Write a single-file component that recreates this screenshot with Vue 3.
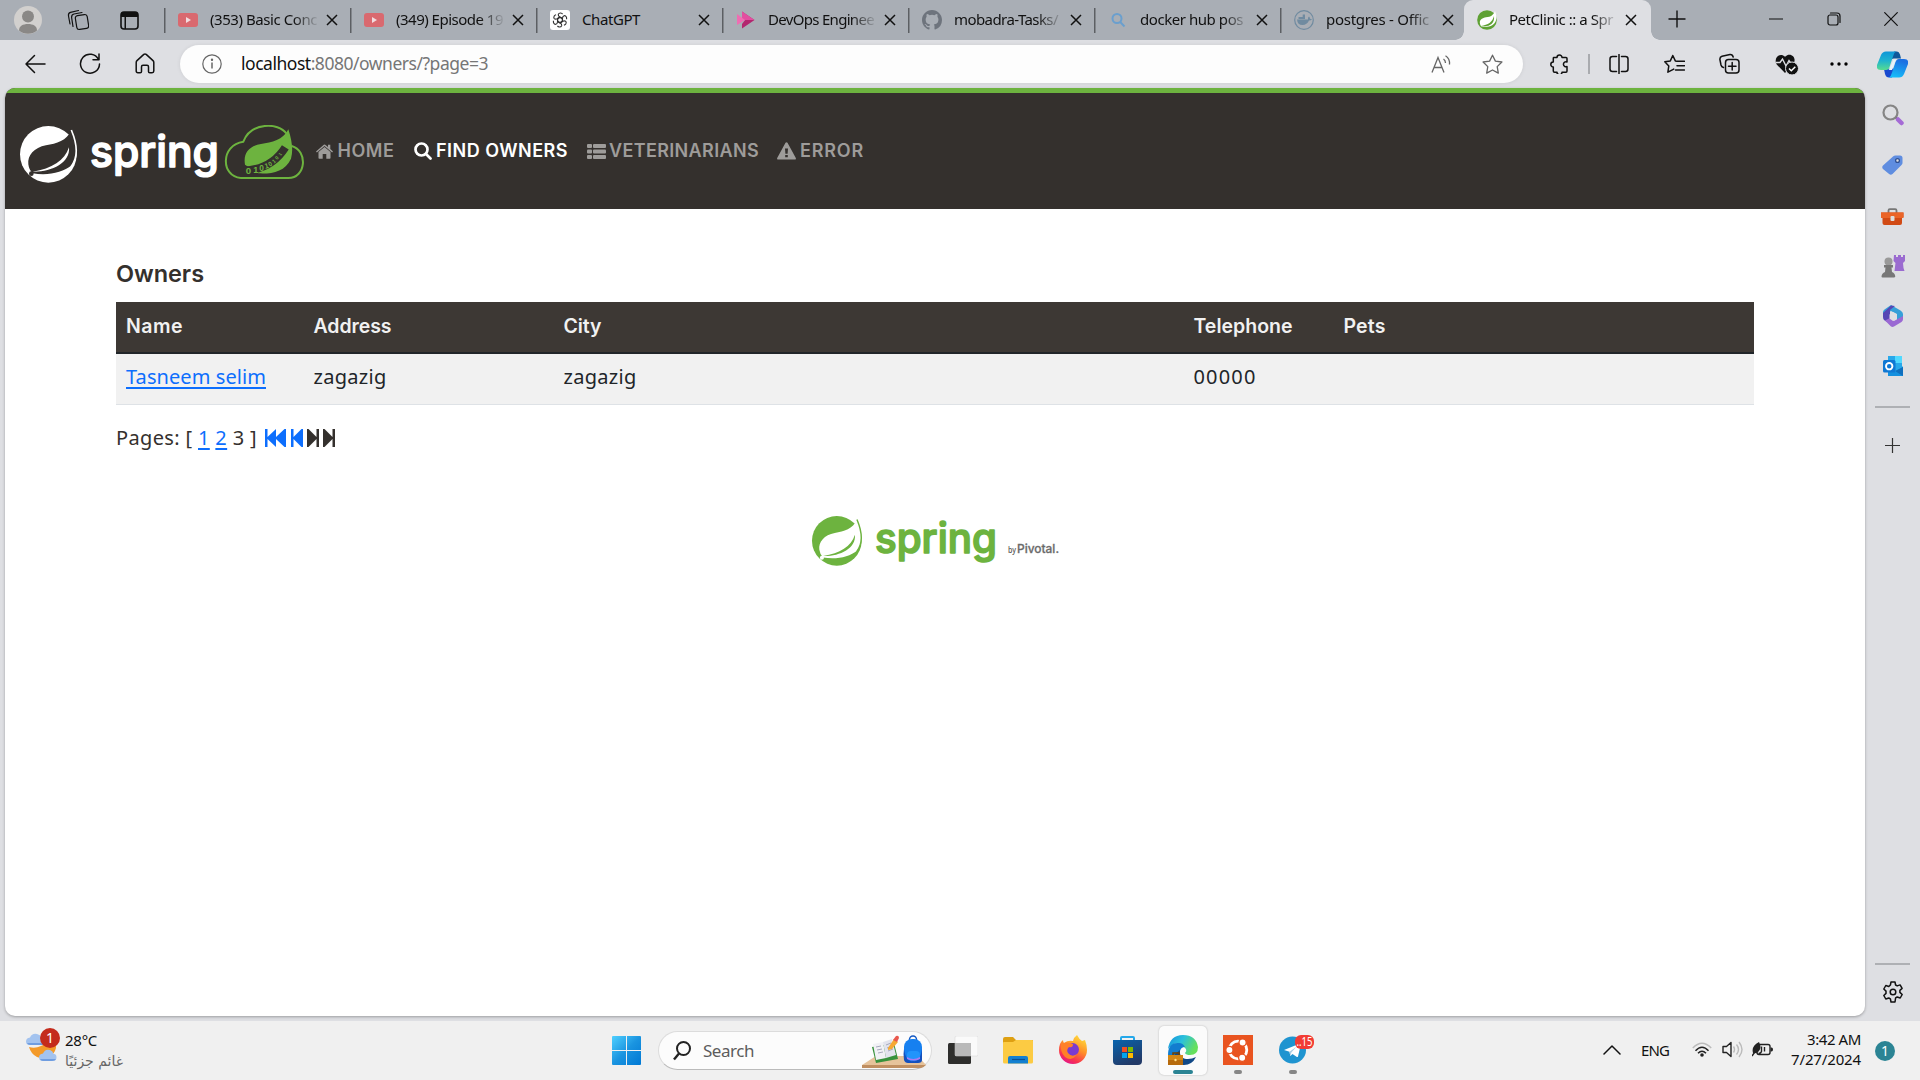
<script setup>
// Tracks a label so that it fills the given width in pixels.
const vFit = {
  mounted(el, { value }) {
    const range = document.createRange()
    range.selectNodeContents(el)
    const natural = range.getBoundingClientRect().width
    const count = el.textContent.trim().length
    el.style.letterSpacing = `${((value - natural) / count).toFixed(3)}px`
  },
}

const tabs = [
  { icon: 'youtube', title: '(353) Basic Conc', sample: 107 },
  { icon: 'youtube', title: '(349) Episode 19', sample: 107 },
  { icon: 'chatgpt', title: 'ChatGPT', sample: 58 },
  { icon: 'devops', title: 'DevOps Enginee', sample: 106 },
  { icon: 'github', title: 'mobadra-Tasks/', sample: 104 },
  { icon: 'search', title: 'docker hub pos', sample: 103 },
  { icon: 'docker', title: 'postgres - Offic', sample: 103 },
  { icon: 'spring', title: 'PetClinic :: a Spr', sample: 104, active: true },
]

const menu = [
  { icon: 'home', label: 'HOME', width: 57 },
  { icon: 'find', label: 'FIND OWNERS', width: 132, active: true },
  { icon: 'list', label: 'VETERINARIANS', width: 150 },
  { icon: 'warn', label: 'ERROR', width: 64 },
]

const owners = [
  { name: 'Tasneem selim', address: 'zagazig', city: 'zagazig', telephone: '00000', pets: '' },
]
</script>

<template>
  <div class="screen">
    <header class="tabstrip">
      <span class="slot avatar-slot">
        <svg width="28" height="28" viewBox="0 0 28 28"><circle cx="14" cy="14" r="14" fill="#d2d0ce" /><circle cx="14" cy="10.5" r="6" fill="#8a8886" /><path d="M5 24.500C5 20 9 18 14 18s9 2 9 6.500a14 14 0 0 1-18 0Z" fill="#8a8886" /></svg>
      </span>
      <span class="slot work-slot">
        <svg width="22" height="22" viewBox="0 0 22 22" class="line"><rect x="9" y="6" width="12" height="14" rx="2.500" transform="rotate(-9 15 13)" /><path d="M6 17.500 4.600 8.500Q4.400 5.500 7 5L15 3.500M3 15 1.500 7Q1 4 3.500 3.300L11.500 1.500" /></svg>
      </span>
      <span class="slot action-slot">
        <svg width="19" height="19" viewBox="0 0 19 19"><rect x="1" y="1" width="17" height="17" rx="3" fill="none" stroke="#111" stroke-width="1.600" /><path d="M1 6V4a3 3 0 0 1 3-3h11a3 3 0 0 1 3 3v2ZM4.500 6h1.500v12H4.500Z" fill="#111" /></svg>
      </span>
      <div v-for="(tab, i) in tabs" :key="i" class="tab" :class="{ active: tab.active }">
        <svg v-if="tab.icon === 'youtube'" class="fav" viewBox="0 0 20 20"><rect y="3" width="20" height="14" rx="3" fill="#d9696f" /><path d="m8 7 5 3-5 3Z" fill="#f2dcdf" /></svg>
        <svg v-else-if="tab.icon === 'chatgpt'" class="fav" viewBox="0 0 20 20"><rect width="20" height="20" rx="3" fill="#fff" /><g fill="none" stroke="#333" stroke-width="1.100"><path v-for="a in 6" :key="a" :transform="`rotate(${a * 60} 10 10)`" d="M12.400 11.400V8.600L9.700 7Q8 5.800 8.300 4.300 9 2.800 10.800 3q1 .2 1.800 1" /><path d="m10 7.200 2.500 1.400v2.800L10 12.800l-2.500-1.400V8.600Z" /></g></svg>
        <svg v-else-if="tab.icon === 'devops'" class="fav" viewBox="0 0 20 20"><path d="M6 1.500 18.500 10 6 18.500V14l3-4-3-3Z" fill="#b3266f" /><path d="M6 1.500 18.500 10H6Z" fill="#e24fa0" /><path d="m1 4 8 6-8 5V4Z" fill="#ef6db2" /></svg>
        <svg v-else-if="tab.icon === 'github'" class="fav" viewBox="0 0 16 16"><path fill="#6e747d" d="M8 0C3.580 0 0 3.580 0 8c0 3.540 2.290 6.530 5.470 7.590.4.070.55-.17.55-.38 0-.19-.01-.82-.01-1.490-2.010.37-2.530-.49-2.690-.94-.09-.23-.48-.94-.82-1.130-.28-.15-.68-.52-.01-.53.63-.01 1.080.58 1.230.82.72 1.210 1.870.87 2.330.66.07-.52.28-.87.51-1.070-1.780-.2-3.640-.89-3.640-3.950 0-.87.31-1.590.82-2.150-.08-.2-.36-1.020.08-2.120 0 0 .67-.21 2.200.82a7.420 7.420 0 0 1 4 0c1.530-1.040 2.200-.82 2.200-.82.44 1.100.16 1.920.08 2.120.51.56.82 1.270.82 2.150 0 3.070-1.870 3.750-3.650 3.950.29.25.54.73.54 1.480 0 1.070-.01 1.930-.01 2.200 0 .21.15.46.55.38A8.010 8.010 0 0 0 16 8c0-4.420-3.580-8-8-8Z" /></svg>
        <svg v-else-if="tab.icon === 'search'" class="fav" viewBox="0 0 20 20" fill="none" stroke="#6a9fce" stroke-width="2"><circle cx="9" cy="8.500" r="4.500" /><path d="m12.200 12 4.300 4.500" /></svg>
        <svg v-else-if="tab.icon === 'docker'" class="fav" viewBox="0 0 20 20"><circle cx="10" cy="10" r="9.300" fill="none" stroke="#708ba0" stroke-width="1.200" /><path d="M3 9.500h11q-.5-2 1-3 1 1 1 2.300 1 0 2 .4-1 1.500-3 1.400Q13 15 8.500 15 3.500 15 3 9.500ZM4.500 7h6.500v2H4.500ZM8.700 4.500H11V7H8.700Z" fill="#708ba0" /></svg>
        <svg v-else class="fav" viewBox="0 0 20 20"><circle cx="10" cy="10" r="9.800" fill="#5fa134" /><path d="M18 1c3 8 1 14-6 15.500-3.500.6-6 .3-8-.2-3-5 0-8.300 5-9C14 6.800 16.500 5 18 1Z" fill="#fff" /><path d="M17 6c-1.500 6-6 9-13 10 8 1.300 14-2 13-10Z" fill="#5fa134" /></svg>
        <span class="tab-title" :class="{ faded: tab.title.length > 8 }"><span v-fit="tab.sample">{{ tab.title }}</span></span>
        <svg class="tab-close" width="12" height="12" viewBox="0 0 12 12"><path d="m1 1 10 10M11 1 1 11" stroke="#111" stroke-width="1.500" /></svg>
      </div>
      <svg class="new-tab" width="18" height="18" viewBox="0 0 18 18"><path d="M9 .5v17M.5 9h17" stroke="#111" stroke-width="1.400" /></svg>
      <div class="window-controls">
        <svg width="14" height="14" viewBox="0 0 14 14" class="line"><path d="M.5 7h13" /></svg>
        <svg width="14" height="14" viewBox="0 0 14 14" class="line"><rect x="1" y="3" width="10" height="10" rx="2" /><path d="M3.500 1H10q3 0 3 3v6.500" /></svg>
        <svg width="14" height="14" viewBox="0 0 14 14" class="line"><path d="m.7.700 12.600 12.600M13.300.7.700 13.300" /></svg>
      </div>
    </header>

    <div class="toolbar">
      <span class="slot"><svg width="22" height="20" viewBox="0 0 22 20" class="line nav-line"><path d="M21 10H2M10.500 1.500 2 10l8.500 8.500" /></svg></span>
      <span class="slot"><svg width="22" height="22" viewBox="0 0 22 22" class="line nav-line"><path d="M19.500 6.500A9.500 9.500 0 1 0 20.500 11M20 1v5.800h-6" /></svg></span>
      <span class="slot"><svg width="20" height="21" viewBox="0 0 20 21" class="line nav-line"><path d="M1.200 9.500Q1.200 8.300 2 7.600L8.800 1.400Q10 .6 11.200 1.400L18 7.600q.8.700.8 1.900V18q0 1.700-1.700 1.700h-2.300q-1.300 0-1.300-1.300v-4.600q0-1.500-1.500-1.500H8q-1.500 0-1.500 1.500v4.600q0 1.300-1.300 1.300H2.900Q1.200 19.700 1.200 18Z" /></svg></span>
      <div class="address">
        <svg width="20" height="20" viewBox="0 0 20 20" fill="none" stroke="#666" stroke-width="1.200"><circle cx="10" cy="10" r="9.200" /><path d="M10 8.500v6" stroke-width="1.500" /><circle cx="10" cy="5.800" r=".6" fill="#666" /></svg>
        <span v-fit="247" class="url"><b>localhost</b>:8080/owners/?page=3</span>
        <svg class="read" width="20" height="18" viewBox="0 0 20 18" fill="none" stroke="#666" stroke-width="1.300"><path d="M1 17.500 7 2.500l6 15M3 12.500h8M12.500 4q2 1.500 2 4M14.500.800Q19 3.500 18.500 9.500" /></svg>
        <svg class="star" width="21" height="20" viewBox="0 0 21 20" fill="none" stroke="#666" stroke-width="1.300" stroke-linejoin="round"><path d="m10.500 1.200 2.900 5.900 6.500.9-4.700 4.600 1.100 6.500-5.800-3.100-5.800 3.100 1.100-6.500L1.100 8l6.500-.9Z" /></svg>
      </div>
      <span class="slot ext"><svg width="20" height="20" viewBox="0 0 20 20" class="line nav-line"><path d="M4.500 3.500H8a2.500 2.500 0 1 1 5 0h4q1 0 1 1V8a2.500 2.500 0 1 0 0 4.500V17q0 1.200-1 1.200h-4a2.500 2.500 0 1 1-5 0H5.500q-1.200 0-1.200-1.200v-4a2.500 2.500 0 1 1 0-5V4.500q0-1 .2-1Z" /></svg></span>
      <i class="divider"></i>
      <span class="slot"><svg width="20" height="20" viewBox="0 0 20 20" class="line nav-line"><path d="M7.500 2.500H3.500Q1 2.500 1 5v10q0 2.500 2.500 2.500h4M12.500 2.500h4Q19 2.500 19 5v10q0 2.500-2.500 2.500h-4M10 .5v19" /></svg></span>
      <span class="slot"><svg width="21" height="20" viewBox="0 0 21 20" class="line nav-line"><path d="M13 7.200 11.300 6.900 8.800 1.500 6.300 6.900.8 7.700l4 4.200-.9 6.300 4.900-2.600.9-.5M13 7.300h7.500M13 11.700h7.500M11.500 16h9" /></svg></span>
      <span class="slot"><svg width="21" height="21" viewBox="0 0 21 21" class="line nav-line"><rect x="6.500" y="6.500" width="13.500" height="13.500" rx="3" /><path d="M13.200 9.500v7.600M9.500 13.300h7.500M4.500 14.500Q2.500 14 2 12L.9 6.500Q.7 4 3 3.200L11 1.500q2.500-.2 3.200 2.500" /></svg></span>
      <span class="slot heart"><svg width="24" height="22" viewBox="0 0 24 22"><path d="M10 20 1.700 11.500C-2 5.500 5-1.500 10 3.800 15-1.500 22 4 18.800 10Z" fill="#111" /><path d="M1 9.500h4L7.500 6l3.500 7 3-5.500 2 3h3" fill="none" stroke="#dedfe3" stroke-width="1.400" /><circle cx="17" cy="15.500" r="6.500" fill="#111" stroke="#dedfe3" /><path d="m14 15.500 2.300 2.300 4-4" fill="none" stroke="#fff" stroke-width="1.500" /></svg></span>
      <span class="slot"><svg width="18" height="4" viewBox="0 0 18 4"><circle cx="2" cy="2" r="1.700" /><circle cx="9" cy="2" r="1.700" /><circle cx="16" cy="2" r="1.700" /></svg></span>
      <span class="copilot"><svg width="31" height="27" viewBox="0 0 31 27">
        <defs>
          <linearGradient id="cpA" x1="0" y1="0" x2="0" y2="1"><stop offset="0" stop-color="#0e96d8" /><stop offset=".5" stop-color="#1fb3cf" /><stop offset="1" stop-color="#57dc90" /></linearGradient>
          <linearGradient id="cpB" x1="0" y1="1" x2=".3" y2="0"><stop offset="0" stop-color="#15c4fb" /><stop offset="1" stop-color="#1c70e2" /></linearGradient>
        </defs>
        <path d="M17 .5h3q2 0 3 3l1 4h-7q-3 0-4 3Z" fill="#10589b" /><path d="M7 18l1 5q1 3.500 4 3.500h3l2-9Z" fill="#1849cf" />
        <path d="M9 .5h10q-2 1-3 5l-3 9q-1 4.500-4 4.500H4q-5 0-4-5L4 4Q5.500.5 9 .5Z" fill="url(#cpA)" />
        <path d="M22 26.500H12q2-1 3-5l3-9Q19 8 22 8h5q5 0 4 5l-4 10q-1.500 3.500-5 3.500Z" fill="url(#cpB)" />
        <path d="M16.500 8.500h3q-1 1-1.800 3.500L15 19h-3.500q1.200-1 2-3.500Z" fill="#e6f4fa" />
      </svg></span>
    </div>

    <div class="body">
      <main class="page">
        <nav class="navbar">
          <svg class="brand" width="290" height="60" viewBox="0 0 290 60">
            <g transform="translate(0 1) scale(.3333)">
              <circle cx="85" cy="85" r="85" fill="#fff" />
              <path d="M154 12C140 45 110 52 78 58C42 65 22 88 25 115Q27 132 38 142C84 150 128 140 155 118C178 88 168 45 154 12Z" fill="#34302d" />
              <path d="M154 12C168 45 180 88 153 122" fill="none" stroke="#fff" stroke-width="5" />
              <path d="M147 64C134 104 96 128 38 137C92 139 152 112 147 64Z" fill="#fff" />
              <circle cx="34" cy="143" r="7" fill="#34302d" />
            </g>
            <text x="70" y="42" textLength="129" lengthAdjust="spacingAndGlyphs" class="wordmark white">spring</text>
            <g transform="translate(205 1) scale(.3333)">
              <path d="M47 156C-12 152-15 57 55 47C78-12 160-11 184 22M200 60C250 75 243 156 190 156H47" fill="none" stroke="#6db33f" stroke-width="6" />
              <path d="M190 10C175 42 140 50 108 54C72 60 54 82 60 116L100 142C140 144 180 138 198 98Q208 65 190 10Z" fill="#6db33f" />
              <path d="M55 134C110 132 152 110 181 64" fill="none" stroke="#34302d" stroke-width="24" />
              <g class="bits"><text x="62" y="144" font-size="29">0</text><text x="85" y="141" font-size="27">1</text><text x="103" y="136" font-size="25">0</text><text x="121" y="128" font-size="22" transform="rotate(-15 121 128)">1</text><text x="134" y="122" font-size="19" transform="rotate(-30 134 122)">0</text><text x="147" y="113" font-size="17" transform="rotate(-40 147 113)">1</text><text x="157" y="102" font-size="15" transform="rotate(-50 157 102)">0</text><text x="167" y="90" font-size="13" transform="rotate(-55 167 90)">1</text></g>
            </g>
          </svg>
          <a v-for="item in menu" :key="item.label" class="nav-item" :class="[item.icon, { current: item.active }]">
            <svg v-if="item.icon === 'home'" width="17" height="15" viewBox="0 0 17 15"><path d="M8.500 3 14.500 8v6q0 .8-.8.800H10.300V10H6.700v4.800H3.300q-.8 0-.8-.8V8ZM0 7.500 7.800.7q.7-.5 1.400 0L12 3V.8h2.300V5L17 7.500l-.9.900L8.500 2 .9 8.400Z" fill="currentColor" /></svg>
            <svg v-else-if="item.icon === 'find'" width="18" height="18" viewBox="0 0 18 18" fill="none" stroke="currentColor" stroke-width="2.700"><circle cx="7.500" cy="7.500" r="6" /><path d="m12 12 4.500 4.500" stroke-linecap="round" /></svg>
            <svg v-else-if="item.icon === 'list'" width="19" height="15" viewBox="0 0 19 15" fill="currentColor"><rect width="5" height="4" rx="1" /><rect y="5.500" width="5" height="4" rx="1" /><rect y="11" width="5" height="4" rx="1" /><rect x="6" width="13" height="4" rx="1" /><rect x="6" y="5.500" width="13" height="4" rx="1" /><rect x="6" y="11" width="13" height="4" rx="1" /></svg>
            <svg v-else width="19" height="18" viewBox="0 0 19 18"><path d="M8.500.800q1-1.200 2 0l8.300 15.200q.5 1.600-1.200 1.600H1.400q-1.700 0-1.200-1.600ZM8 6.500l.4 5.300h2.200l.4-5.300ZM8.200 13v2.300h2.600V13Z" fill="currentColor" fill-rule="evenodd" /></svg>
            <span v-fit="item.width">{{ item.label }}</span>
          </a>
        </nav>

        <section class="content">
          <h2 v-fit="88">Owners</h2>
          <table>
            <colgroup><col class="c-name" /><col class="c-address" /><col class="c-city" /><col class="c-phone" /><col /></colgroup>
            <thead>
              <tr>
                <th><span v-fit="57">Name</span></th><th><span v-fit="78">Address</span></th><th><span v-fit="38">City</span></th><th><span v-fit="99">Telephone</span></th><th><span v-fit="42">Pets</span></th>
              </tr>
            </thead>
            <tbody>
              <tr v-for="owner in owners" :key="owner.name">
                <td><a v-fit="140">{{ owner.name }}</a></td><td><span v-fit="73">{{ owner.address }}</span></td><td><span v-fit="73">{{ owner.city }}</span></td><td><span v-fit="63">{{ owner.telephone }}</span></td><td>{{ owner.pets }}</td>
              </tr>
            </tbody>
          </table>
          <div class="pages">
            <span class="page-text"><span v-fit="141">Pages: [ <a>1</a> <a>2</a> 3 ]</span></span>
            <svg width="22" height="18" viewBox="0 0 22 18" class="blue"><path d="M0 0h2.500v8L11 0v8l8.500-8H21v18h-1.500L11 10v8l-8.500-8v8H0Z" /></svg>
            <svg width="12" height="18" viewBox="0 0 12 18" class="blue"><path d="M0 0h2.500v8L10.500 0H12v18h-1.500l-8-8v8H0Z" /></svg>
            <svg width="12" height="18" viewBox="0 0 12 18"><path d="M12 0H9.500v8L1.500 0H0v18h1.500l8-8v8H12Z" /></svg>
            <svg width="12" height="18" viewBox="0 0 12 18"><path d="M12 0H9.500v8L1.500 0H0v18h1.500l8-8v8H12Z" /></svg>
          </div>
          <svg class="footer-logo" width="250" height="56" viewBox="0 0 250 56">
            <g transform="scale(.292)">
              <circle cx="85" cy="85" r="85" fill="#6db33f" />
              <path d="M154 12C140 45 110 52 78 58C42 65 22 88 25 115Q27 132 38 142C84 150 128 140 155 118C178 88 168 45 154 12Z" fill="#fff" />
              <path d="M154 12C168 45 180 88 153 122" fill="none" stroke="#6db33f" stroke-width="5" />
              <path d="M147 64C134 104 96 128 38 137C92 139 152 112 147 64Z" fill="#6db33f" />
              <circle cx="34" cy="143" r="7" fill="#fff" />
            </g>
            <text x="63" y="36.500" textLength="122" lengthAdjust="spacingAndGlyphs" class="wordmark green">spring</text>
            <text x="196" y="36.500" textLength="8" lengthAdjust="spacingAndGlyphs" class="by">by</text>
            <text x="205" y="36.500" textLength="42" lengthAdjust="spacingAndGlyphs" class="pivotal">Pivotal.</text>
          </svg>
        </section>
      </main>

      <aside class="sidebar">
        <span class="side"><svg width="22" height="22" viewBox="0 0 22 22" fill="none"><circle cx="8.500" cy="8.500" r="7" stroke="#858585" stroke-width="2.200" /><path d="m13.800 13.500 2 2" stroke="#777" stroke-width="2" /><path d="m16 15.500 3.500 3.500" stroke="#a56bd6" stroke-width="4.500" stroke-linecap="round" /></svg></span>
        <span class="side"><svg width="21" height="21" viewBox="0 0 21 21"><path d="M11 1.500Q12 .6 13.500.500L18 .5q2.500 0 2.500 2.500v5q0 1-1 2l-9 9q-1.700 1.500-3.400 0L1 14q-1.500-1.800 0-3.500Z" fill="#5f8de0" /><circle cx="15.500" cy="5.500" r="1.900" fill="#dedfe3" stroke="#2e4f91" stroke-width="1.300" /></svg></span>
        <span class="side"><svg width="23" height="18" viewBox="0 0 23 18"><path d="M7.500 5V2.500q0-1.300 1.300-1.300h5.400q1.300 0 1.300 1.300V5" fill="none" stroke="#777" stroke-width="1.800" /><path d="M0 4.500h22.500V9l-1.500 1v5q0 2-2 2H3.500q-2 0-2-2v-5L0 9Z" fill="#d14a15" /><path d="M0 4.500h22.500V10H0Z" fill="#ea6428" /><rect x="9.500" y="8" width="4" height="5" rx="1" fill="#ddd" /></svg></span>
        <span class="side"><svg width="24" height="24" viewBox="0 0 24 24"><path d="M13 1h2v2h2V1h3v2h2V1h2v6l-2 2 .5 5 1 3H13.500l1-8-2-2Z" fill="#9a6bd0" /><circle cx="7.500" cy="7.500" r="4" fill="#999" /><path d="M3 11h9v2.500h-1.500l.5 4.500q3 1 3.300 4.500Q14 23.500 13 23.500H1.500Q.500 23.500.5 22.500.8 19 4 18l.5-4.500H3Z" fill="#777" /></svg></span>
        <span class="side"><svg width="20" height="22" viewBox="0 0 20 22"><path d="M8 0 17.500 5.500Q20 7 20 9v5l-6 2V9L8 6 0 10V7q0-1.500 1.500-2.500Z" fill="#369fd8" /><path d="M0 8 8 .5 12 1 7 5v10l-3 2-3-2Q0 14 0 12Z" fill="#5546b5" /><path d="m2 15.500 5-2.500 4 3 9-5v3q0 2-1.500 3L11 21.500q-1.500.8-3 0Z" fill="#9a69d3" /><path d="m10 7 4 2.500v4L10 16l-3.500-2.500v-4Z" fill="#dedfe3" /></svg></span>
        <span class="side"><svg width="20" height="20" viewBox="0 0 20 20"><path d="M5 0h14v10l1 1v8.500H5Z" fill="#28a8ea" /><path d="M12 0h7v7h-7Z" fill="#50d9ff" /><path d="m5 12 7 4 8-5v9H5Z" fill="#1490df" /><path d="m12 15 8 5v-9Z" fill="#0f6fbe" /><rect y="4" width="12.500" height="12.500" rx="1.500" fill="#0f78d4" /><circle cx="6.200" cy="10.200" r="3.200" fill="none" stroke="#fff" stroke-width="1.900" /></svg></span>
        <i class="rule"></i>
        <svg class="side-add" width="15" height="15" viewBox="0 0 15 15"><path d="M7.500 0v15M0 7.500h15" stroke="#333" stroke-width="1.200" /></svg>
        <i class="rule lower"></i>
        <svg class="gear" width="22" height="22" viewBox="0 0 22 22" fill="none" stroke="#111" stroke-width="1.500" stroke-linejoin="round"><path d="M9 1h4l.6 3 1.600.9 2.900-1 2 3.500-2.200 2v2l2.300 2.100-2 3.500-3-1-1.600.9L13 21H9l-.6-3.100-1.600-.9-3 1-2-3.500L4 12.400v-2.300L1.800 8l2-3.500 3 1L8.400 4Z" /><circle cx="11" cy="11" r="2.800" /></svg>
      </aside>
    </div>

    <footer class="taskbar">
      <div class="weather">
        <svg width="36" height="36" viewBox="0 0 36 36">
          <path d="M3 20q6 2 12-1 7-3 10-7l4 1q3 8-2 14-7 7-16 3-6-3-8-10Z" fill="#f39a2a" />
          <path d="M4 18q-4 0-4-3.500 0-3.500 4-4Q6 6 11 7q4 1 4.500 4H18v7ZM17 34q-4 0-4-3.500 0-3.500 4-4 2-5 7-3.500 3 1 3.500 4 3-.5 3 3.500 0 3.500-4 3.500Z" fill="#a3c3ef" />
          <path d="M1 16h16v2H4q-2 0-3-2ZM14 32h16q-1 2-4 2h-9q-2 0-3-2Z" fill="#6f9de0" />
          <circle cx="24" cy="11" r="10" fill="#c42b1c" /><text x="24" y="16" text-anchor="middle" class="badge-text">1</text>
        </svg>
        <div class="weather-text"><span><b v-fit="32">28°C</b></span><span class="cond" dir="rtl">غائم جزئيًا</span></div>
      </div>

      <svg class="start" width="29" height="29" viewBox="0 0 29 29"><defs><linearGradient id="win" x1="0" y1="0" x2="1" y2="1"><stop offset="0" stop-color="#4fd0ff" /><stop offset=".5" stop-color="#1a94e0" /><stop offset="1" stop-color="#0078d4" /></linearGradient></defs><path d="M1 0h13v14H0V1q0-1 1-1ZM15 0h13q1 0 1 1v13H15ZM0 15h14v14H1q-1 0-1-1ZM15 15h14v13q0 1-1 1H15Z" fill="url(#win)" /></svg>
      <div class="searchbox">
        <svg width="18" height="20" viewBox="0 0 18 20" fill="none" stroke="#222" stroke-width="2"><circle cx="10.500" cy="7.500" r="6.500" /><path d="m6 12.500-5 6" stroke-width="2.400" /></svg>
        <span v-fit="51">Search</span>
        <svg class="promo" width="64" height="34" viewBox="0 0 64 34">
          <path d="M14 21h42l8 9H0Z" fill="#e6c39b" /><path d="M0 30h64q-3 3-5 3H0Z" fill="#c08f61" />
          <path d="m10 12 22-4 4 16-22 4Z" fill="#37923c" /><path d="m11 9 10-2 3 16-10 2Z" fill="#f1f1f5" /><path d="m21 7 9-3 4 16-10 3Z" fill="#e2e3ed" /><path d="m14 12 5-1m-4 4 5-1m-4 4 5-1m3-7 5-2m-4 5 5-2m-4 5 5-2" stroke="#a7a9bd" />
          <path d="m26 13 6-9 4 3-6 7-4 1Z" fill="#f6a934" /><path d="m31 5 3-4q3-1 3 2l-2 4Z" fill="#e9594e" />
          <rect x="47.500" y="1" width="7" height="8" rx="3.500" fill="none" stroke="#1559c4" stroke-width="1.500" /><rect x="42" y="4" width="18" height="24" rx="8" fill="#1680f0" /><path d="M42 14q-1 5 0 11 1 3 4 3h10q4 0 4-3V14q-2 14-9 12-7 2-9-12Z" fill="#1450bd" /><rect x="45" y="16" width="13" height="9" rx="4" fill="#2194fb" /><path d="M45 22q6 4 13 0v2q-6 3-13 0Z" fill="#a47cf5" />
        </svg>
      </div>
      <svg class="app taskview" width="30" height="28" viewBox="0 0 30 28"><rect y="7" width="23" height="21" rx="1.500" fill="#2e2e2c" /><rect x="7" width="23" height="20" rx="1.500" fill="#fafafa" stroke="#d5d5d5" stroke-width=".5" /><path d="M7 7h16v13H7Z" fill="#b9b9b9" /></svg>
      <svg class="app explorer" width="30" height="27" viewBox="0 0 30 27"><path d="M0 2q0-2 2-2h8l3 3h17v8H0Z" fill="#dea012" /><path d="M0 6q0-1 1-1h9l3-2h16q1 0 1 1v21q0 1.500-1.500 1.500h-27Q0 26.500 0 25Z" fill="#fccb43" /><path d="M5 26.500V21q0-2 2-2h16q2 0 2 2v5.500Z" fill="#1380d1" /><path d="M9 22.500h13" stroke="#0b4f91" stroke-width="1.200" /></svg>
      <svg class="app firefox" width="28" height="29" viewBox="0 0 28 29"><defs><linearGradient id="ff" x1=".8" y1="0" x2=".3" y2="1"><stop offset="0" stop-color="#ffe23e" /><stop offset=".45" stop-color="#ff9028" /><stop offset=".8" stop-color="#f8334f" /><stop offset="1" stop-color="#e3158c" /></linearGradient></defs><path d="M18 0q2 4 5 6l3-1q2 5 2 10A14 14 0 0 1 0 15Q0 8 4 5q0 2 1 3 4-3 9-2 1-4 4-6Z" fill="url(#ff)" /><circle cx="13.500" cy="14.500" r="6.500" fill="#7b3ad0" /><path d="M2 9q6-3 12 0 0 4-4 3-3 3-1 6 4 5 9 1-5 8-12 3-5-5-4-13Z" fill="#ff8028" /></svg>
      <svg class="app store" width="29" height="29" viewBox="0 0 29 29"><defs><linearGradient id="st" x1="0" y1="0" x2=".5" y2="1"><stop offset="0" stop-color="#0864ae" /><stop offset="1" stop-color="#223a68" /></linearGradient></defs><path d="M8 5V2q0-1 1-1h11q1 0 1 1v3" fill="none" stroke="#24a8ea" stroke-width="2" /><path d="M0 4h29v21q0 4-4 4H4q-4 0-4-4Z" fill="url(#st)" /><path d="M9 11h5v5H9Z" fill="#f25022" /><path d="M15 11h5v5h-5Z" fill="#7fba00" /><path d="M9 17h5v5H9Z" fill="#00a4ef" /><path d="M15 17h5v5h-5Z" fill="#ffb900" /></svg>
      <div class="app tile">
        <svg width="30" height="30" viewBox="0 0 30 30"><defs><linearGradient id="ed" x1="0" y1="0" x2="1" y2=".4"><stop offset="0" stop-color="#1590dc" /><stop offset=".5" stop-color="#2bc0dc" /><stop offset="1" stop-color="#66e05c" /></linearGradient></defs><path d="M0 14Q2 0 15 0q13 0 15 12 0 8-8 8-4 0-5-2 3-3-1-6Q8 4 0 14Z" fill="url(#ed)" /><path d="M0 20Q0 7 11 8q4 0 6 4-4 0-5 4-1 3 1 7H0Z" fill="#127dcf" /><path d="M12 15q-1 6 4 8.500 6 1.500 12-1.500-4 8-12 8H6V20Z" fill="#124987" /><path d="M5 20v-2h6v2" fill="none" stroke="#704100" stroke-width="1.500" /><rect y="20" width="15" height="10" fill="#b76b0d" /><path d="M0 20h15v5H0Z" fill="#d38714" /><circle cx="7.500" cy="25" r="1.200" fill="#ffe08a" /></svg>
        <i class="mark on"></i>
      </div>
      <div class="app plain ubuntu">
        <svg width="30" height="30" viewBox="0 0 30 30"><path d="M0 0h30v30H0Z" fill="#e95420" /><circle cx="15" cy="15" r="8.800" fill="none" stroke="#fff" stroke-width="2.800" /><g fill="#fff" stroke="#e95420" stroke-width="1.300"><circle cx="6.400" cy="15" r="3.600" /><circle cx="19.600" cy="7.500" r="3.600" /><circle cx="19.200" cy="22.800" r="3.600" /></g></svg>
        <i class="mark"></i>
      </div>
      <div class="app plain telegram">
        <svg width="36" height="30" viewBox="0 0 36 30"><circle cx="13.500" cy="15" r="13.500" fill="#1f94d0" /><path d="M5 15 21 8.500q1 0 .8 1L19 21.500q-.5 1-1.500.3L13.500 19l-2.200 2-.8-4.300Z" fill="#fff" /><path d="m10.500 16.800 7-5-5 5.500-1.200 3.700Z" fill="#a9cde4" /><rect x="16" y="0" width="19" height="14" rx="6" fill="#f23c34" /><text x="17.500" y="11.300" textLength="16" lengthAdjust="spacingAndGlyphs" class="tg">..15</text></svg>
        <i class="mark"></i>
      </div>

      <div class="tray">
        <svg width="18" height="10" viewBox="0 0 18 10" class="line nav-line"><path d="m1 9 8-8 8 8" /></svg>
        <span class="lang"><b v-fit="28">ENG</b></span>
        <svg class="wifi" width="20" height="16" viewBox="0 0 20 16" fill="none" stroke-width="1.500"><path d="M.8 6Q10-3.500 19.200 6" stroke="#bbb" /><path d="M3.500 8.800Q10 1.500 16.500 8.800M6 11.300Q10 7 14 11.300" stroke="#222" /><circle cx="10" cy="13" r="1.800" fill="#222" /></svg>
        <svg class="volume" width="21" height="17" viewBox="0 0 21 17" fill="none" stroke-width="1.400"><path d="M1 5.500h3.500L9 1.500v14l-4.500-4H1Z" stroke="#222" stroke-linejoin="round" /><path d="M11.500 5.500q2 3 0 6M14.500 3.500q4 5 0 10M17 1q6 7.500 0 15" stroke="#bbb" /></svg>
        <svg class="battery" width="21" height="15" viewBox="0 0 21 15"><rect x="5" y="2.500" width="13" height="10" rx="2" fill="none" stroke="#222" stroke-width="1.400" /><path d="M18.500 5.500h1q1.500 0 1.500 2t-1.500 2h-1ZM1 11Q-1 4 7 0q3 6 0 9-2 3-6 2Z" fill="#222" /><path d="m0 14 5-7M9.500 4.500v5q-.5 2-3 2M12.500 5v4.500" fill="none" stroke="#222" stroke-width="1.400" /></svg>
        <div class="clock"><span><b v-fit="54">3:42 AM</b></span><span><b v-fit="70">7/27/2024</b></span></div>
        <span class="notice">1</span>
      </div>
    </footer>
  </div>
</template>

<style>
body { margin: 0; overflow: hidden; }
</style>

<style scoped>
.screen { width: 1920px; height: 1080px; display: flex; flex-direction: column; background: #dedfe3; font-family: "Noto Sans", "Open Sans", sans-serif; color: #111; }
.screen * { box-sizing: border-box; }
svg { display: block; flex: none; }
i { display: block; flex: none; }
b { font-weight: 400; }
.line { fill: none; stroke: #111; stroke-width: 1.200; stroke-linecap: round; stroke-linejoin: round; }
.nav-line { stroke-width: 1.500; }
.slot { width: 55px; height: 100%; flex: none; display: flex; align-items: center; justify-content: center; }

.tabstrip { height: 40px; display: flex; background: #a9aeb5; flex: none; }
.avatar-slot { width: 55px; }
.work-slot { width: 45px; }
.action-slot { width: 59px; }
.tab-title { width: 107px; margin-left: 12px; white-space: nowrap; font-size: 15px; line-height: 36px; height: 38px; }
.tab-title.faded { mask-image: linear-gradient(90deg, #000 78%, rgba(0, 0, 0, .1)); }
.tab { width: 186px; height: 40px; flex: none; display: flex; align-items: center; padding-left: 19px; background: linear-gradient(#5c5f63, #5c5f63) 5px 8px / 1.500px 25px no-repeat; }
.tab.active { width: 187px; border-radius: 9px 9px 0 0; background: #dedfe3; position: relative; padding-left: 13px; margin-left: 3px; }
.tab.active::before, .tab.active::after { content: ""; position: absolute; bottom: 0; width: 9px; height: 9px; }
.tab.active::before { left: -9px; background: radial-gradient(circle at 0 0, transparent 8.500px, #dedfe3 9px); }
.tab.active::after { right: -9px; background: radial-gradient(circle at 100% 0, transparent 8.500px, #dedfe3 9px); }
.fav { width: 20px; height: 20px; }
.tab-close { margin-left: 9px; }
.new-tab { margin: 10px 0 0 17px; }
.window-controls { margin: 12px 22px 0 auto; display: flex; gap: 43.500px; }

.toolbar { height: 48px; flex: none; display: flex; align-items: center; padding-left: 7px; }
.toolbar > .slot { padding-bottom: 1px; }
.address { width: 1343px; height: 38px; margin-left: 8px; flex: none; border-radius: 19px; background: #fdfdfd; box-shadow: 0 0 4px rgba(0, 0, 0, .08); display: flex; align-items: center; padding-left: 22px; }
.url { margin-left: 19px; font-size: 17.500px; line-height: 30px; margin-top: -3px; color: #767676; white-space: nowrap; }
.url b { color: #111; }
.read { margin-left: auto; }
.star { margin: 0 20px 0 31px; }
.ext { margin-left: 8px; }
.divider { width: 1.500px; height: 20px; background: #a9abaf; margin: 0 2px; }
.heart { padding-left: 5px; }
.copilot { width: 52px; display: flex; justify-content: center; }

.body { height: 933px; flex: none; display: flex; }
.page { width: 1860px; height: 928px; margin-left: 5px; flex: none; background: #fff; border-radius: 10px; overflow: hidden; box-shadow: 0 1px 3px rgba(0, 0, 0, .3); }
.navbar { height: 121px; border-top: 5px solid #6db33f; background: #34302d; display: flex; padding-left: 15px; }
.brand { margin-top: 32px; }
.wordmark { font-family: Inter, sans-serif; font-weight: 500; stroke-width: 1.600; stroke-linejoin: round; }
.wordmark.white { font-size: 44px; fill: #fff; stroke: #fff; }
.wordmark.green { font-size: 41px; fill: #6db33f; stroke: #6db33f; }
.bits { fill: #6db33f; font-family: "Liberation Sans", sans-serif; font-weight: 700; }
.nav-item { height: 30px; margin-top: 43px; display: flex; align-items: center; color: #9e9c9a; font-family: Inter, sans-serif; font-weight: 600; font-size: 18px; line-height: 30px; white-space: nowrap; text-decoration: none; }
.nav-item.current { color: #fff; }
.nav-item.home { margin-left: 6px; width: 98px; gap: 4.500px; }
.nav-item.find { width: 172.500px; gap: 4px; }
.nav-item.list { width: 190.500px; gap: 3.500px; }
.nav-item.warn { gap: 4px; }

.content { width: 1638px; margin-left: 111px; padding-top: 44px; display: flex; flex-direction: column; }
h2 { margin: 0; align-self: flex-start; font: 600 23.500px/41px Inter, sans-serif; height: 40px; color: #34302d; }
table { margin-top: 9px; width: 1638px; table-layout: fixed; border-collapse: separate; border-spacing: 0; font-size: 20px; line-height: 30px; color: #212529; }
.c-name { width: 187.500px; }
.c-address { width: 250px; }
.c-city { width: 630px; }
.c-phone { width: 150px; }
th { height: 52px; padding: 8px 10px 10px; text-align: left; background: #3d3834; border-bottom: 2px solid #212529; color: #f1f1f1; font: 600 19.500px/30px Inter, sans-serif; }
td { height: 51px; padding: 8px 10px 12px; background: #f1f1f1; border-bottom: 1px solid #dee2e6; }
td a, .pages a { color: #0d6efd; text-decoration: underline; text-underline-offset: 3px; }
.pages { margin-top: 18px; height: 30px; display: flex; align-items: center; gap: 4px; font-size: 20px; color: #34302d; }
.page-text { width: 145px; white-space: nowrap; line-height: 30px; }
.pages svg { fill: #34302d; }
.pages .blue { fill: #0d6efd; }
.footer-logo { margin: 63px 0 0 695.500px; overflow: visible; }
.by { font: 500 9.500px "Noto Sans", sans-serif; fill: #555; }
.pivotal { font: 500 12px Inter, sans-serif; fill: #666; stroke: #777; stroke-width: .3; }

.sidebar { width: 55px; display: flex; flex-direction: column; align-items: center; padding-top: 2px; }
.side { width: 55px; height: 50.200px; flex: none; display: flex; align-items: center; justify-content: center; }
.side:nth-child(2) { padding-top: 1px; }
.side:nth-child(3) { padding-top: 3px; }
.rule { width: 35px; height: 1.500px; background: #aeb0b4; margin-top: 15px; }
.side-add { margin: 30.500px 0 0; }
.rule.lower { margin-top: 510px; }
.gear { margin-top: 16px; }

.taskbar { height: 59px; flex: none; display: flex; background: #f0f0f0; font-size: 15px; }
.weather { width: 612px; flex: none; display: flex; padding: 6px 0 0 26px; }
.badge-text { fill: #fff; font: 14px "Noto Sans", sans-serif; }
.weather-text { margin: 3px 0 0 3px; display: flex; flex-direction: column; align-items: flex-start; line-height: 20px; }
.cond { color: #666; font: 14px/22px "DejaVu Sans", sans-serif; letter-spacing: 0; white-space: nowrap; }
.start { margin-top: 15px; }
.searchbox { width: 274px; height: 39px; margin: 10px 0 0 17px; flex: none; border: 1px solid #dcdcdc; border-bottom-color: #bbb; border-radius: 20px; background: #fcfcfc; display: flex; align-items: center; padding-left: 14px; color: #5c5c5c; font-size: 17px; }
.searchbox span { margin-left: 12px; line-height: 30px; }
.promo { margin: 3px 5px 0 auto; }
.app { flex: none; }
.taskview { margin: 15px 0 0 16px; }
.explorer { margin: 16px 0 0 25px; }
.firefox { margin: 14px 0 0 26px; }
.store { margin: 15px 0 0 26px; }
.tile { width: 48px; height: 49px; margin: 5px 0 0 17px; border-radius: 5px; background: #fbfbfb; box-shadow: 0 0 2px rgba(0, 0, 0, .25); display: flex; flex-direction: column; align-items: center; padding-top: 9px; }
.plain { display: flex; flex-direction: column; align-items: center; padding-top: 14px; }
.mark { width: 8px; height: 4px; border-radius: 2px; background: #868686; margin-top: 5px; }
.mark.on { width: 20px; background: #2b8494; }
.ubuntu { margin-left: 16px; }
.telegram { margin-left: 26px; align-items: flex-start; }
.telegram .mark { margin-left: 10px; }
.tg { fill: #fff; font: 12px "Noto Sans", sans-serif; }
.tray { margin-left: auto; height: 57px; display: flex; align-items: center; padding-right: 25px; }
.lang { width: 30px; margin-left: 20px; white-space: nowrap; }
.wifi { margin-left: 21px; }
.volume { margin-left: 10px; }
.battery { margin-left: 9px; }
.clock { width: 72px; margin: -1px 0 0 16px; display: flex; flex-direction: column; align-items: flex-end; line-height: 20px; white-space: nowrap; }
.notice { width: 20px; height: 20px; margin: 2px 0 0 14px; border-radius: 50%; background: #2b8494; color: #fff; text-align: center; font-size: 14px; line-height: 20px; }
</style>
